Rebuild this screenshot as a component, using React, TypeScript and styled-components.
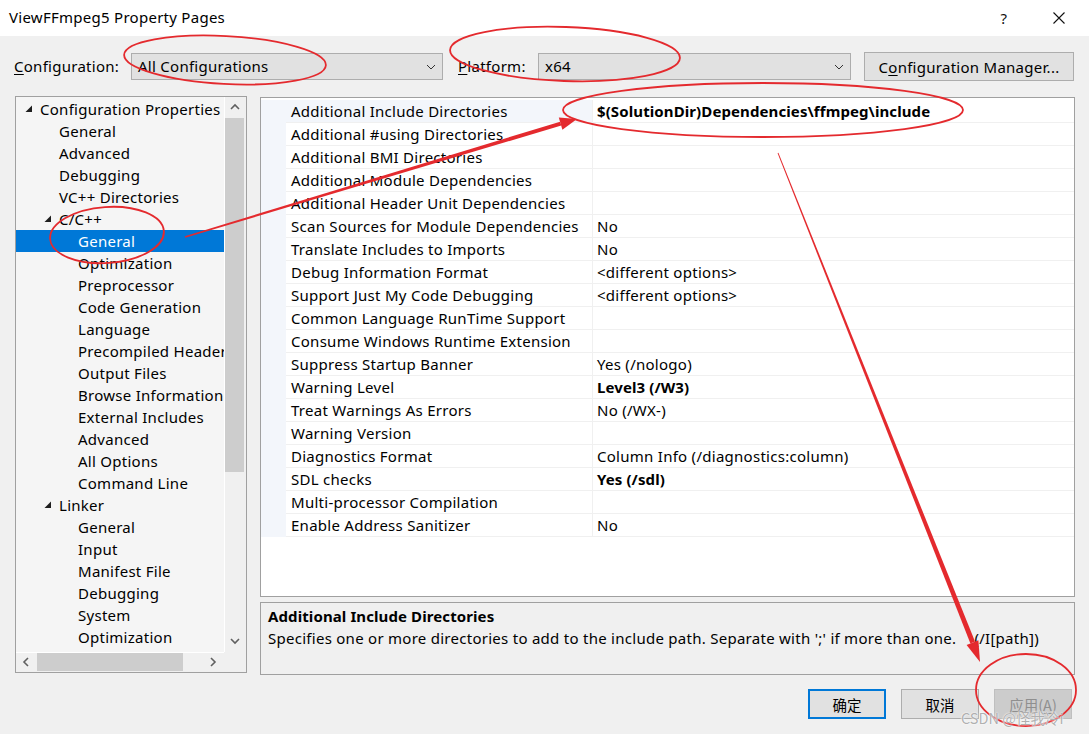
import React from 'react';
import styled, { createGlobalStyle } from 'styled-components';

const FONT = `"Noto Sans", "Open Sans", "Noto Sans CJK SC", sans-serif`;
const CJK = `"Noto Sans CJK SC", "Noto Sans", sans-serif`;

const Global = createGlobalStyle`
  html, body { margin: 0; padding: 0; background: #f0f0f0; overflow: hidden; }
  * { box-sizing: border-box; }
`;

const Window = styled.div`
  position: relative;
  width: 1089px;
  height: 734px;
  background: #f0f0f0;
  font-family: ${FONT};
  font-size: 15px;
  letter-spacing: 0.27px;
  color: #000;
  display: flex;
  flex-direction: column;
  overflow: hidden;
`;

const TitleBar = styled.div`
  height: 36px;
  background: #fff;
  display: flex;
  align-items: center;
  padding-left: 9px;
  flex-shrink: 0;
`;

const Title = styled.div`
  flex: 1;
  font-size: 15px;
  margin-top: -2px;
`;

const TitleButton = styled.div<{ $mr: number }>`
  width: 46px;
  height: 36px;
  margin-right: ${(p) => p.$mr}px;
  display: flex;
  align-items: center;
  justify-content: center;
  font-size: 15px;
  color: #111;
`;

const TopRow = styled.div`
  margin-top: 17px;
  height: 27px;
  display: flex;
  align-items: center;
  padding-left: 14px;
  flex-shrink: 0;
`;

const FieldLabel = styled.div<{ $w: number; $ml?: number }>`
  width: ${(p) => p.$w}px;
  margin-left: ${(p) => p.$ml ?? 0}px;
  margin-top: -1px;
  white-space: nowrap;
  u { text-decoration: underline; text-underline-offset: 2px; }
`;

const Combo = styled.div<{ $w: number }>`
  width: ${(p) => p.$w}px;
  height: 27px;
  background: #e1e1e1;
  border: 1px solid #adadad;
  display: flex;
  align-items: center;
  padding-left: 6px;
  padding-right: 6px;
`;

const ComboText = styled.div`
  flex: 1;
  margin-top: -1px;
`;

const Button = styled.div<{ $w: number; $h: number; $variant?: 'default' | 'normal' | 'disabled' }>`
  width: ${(p) => p.$w}px;
  height: ${(p) => p.$h}px;
  display: flex;
  align-items: center;
  justify-content: center;
  background: ${(p) => (p.$variant === 'disabled' ? '#cccccc' : '#e1e1e1')};
  border: ${(p) =>
    p.$variant === 'default' ? '2px solid #0078d7' : p.$variant === 'disabled' ? '1px solid #bfbfbf' : '1px solid #adadad'};
  color: ${(p) => (p.$variant === 'disabled' ? '#8f8f8f' : '#000')};
  white-space: nowrap;
  u { text-decoration: underline; text-underline-offset: 2px; }
`;

const ManagerButton = styled(Button)`
  margin-left: 13px;
`;

const Main = styled.div`
  margin-top: 16px;
  padding-left: 15px;
  display: flex;
  align-items: flex-start;
  flex-shrink: 0;
`;

const Tree = styled.div`
  width: 232px;
  height: 577px;
  border: 1px solid #a0a0a0;
  background: #f0f0f0;
  display: grid;
  grid-template-columns: 208px 22px;
  grid-template-rows: 555px 20px;
`;

const TreeItems = styled.div`
  background: #f5f5f5;
  overflow: hidden;
  padding-top: 1px;
`;

const TreeRow = styled.div<{ $level: number; $selected?: boolean }>`
  height: 22px;
  display: flex;
  align-items: center;
  padding-left: ${(p) => 9 + 19 * p.$level}px;
  background: ${(p) => (p.$selected ? '#0078d7' : 'transparent')};
  color: ${(p) => (p.$selected ? '#fff' : '#000')};
  white-space: nowrap;
`;

const Expander = styled.div`
  width: 15px;
  height: 22px;
  flex-shrink: 0;
  display: flex;
  align-items: center;
  padding-bottom: 1px;
`;

const VScroll = styled.div`
  background: #f0f0f0;
  border-left: 1px solid #fff;
  padding-right: 2px;
  display: flex;
  flex-direction: column;
`;

const ScrollArrow = styled.div<{ $size: number }>`
  flex: 0 0 ${(p) => p.$size}px;
  display: flex;
  align-items: center;
  justify-content: center;
`;

const VThumb = styled.div`
  flex: 0 0 354px;
  background: #cdcdcd;
`;

const ScrollFill = styled.div`
  flex: 1;
`;

const HScroll = styled.div`
  background: #f0f0f0;
  border-top: 1px solid #fff;
  display: flex;
  padding-bottom: 1px;
`;

const HThumb = styled.div`
  flex: 0 0 146px;
  background: #cdcdcd;
`;

const Corner = styled.div`
  background: #f0f0f0;
`;

const RightCol = styled.div`
  margin-left: 13px;
  margin-top: 1px;
  width: 815px;
  display: flex;
  flex-direction: column;
  gap: 5px;
`;

const Grid = styled.div`
  height: 500px;
  border: 1px solid #a0a0a0;
  background: #fff;
  padding-top: 2px;
  overflow: hidden;
`;

const GridRow = styled.div`
  height: 23px;
  display: flex;
`;

const Gutter = styled.div`
  width: 25px;
  background: #f3f6fb;
`;

const NameCell = styled.div<{ $selected?: boolean }>`
  width: 307px;
  padding-left: 5px;
  display: flex;
  align-items: center;
  border-bottom: 1px solid #f0f0f0;
  border-right: 1px solid #f0f0f0;
  background: ${(p) => (p.$selected ? '#f3f6fb' : '#fff')};
  white-space: nowrap;
  overflow: hidden;
`;

const ValueCell = styled.div<{ $bold?: boolean }>`
  flex: 1;
  padding-left: 4px;
  display: flex;
  align-items: center;
  border-bottom: 1px solid #f0f0f0;
  font-weight: ${(p) => (p.$bold ? 700 : 400)};
  letter-spacing: ${(p) => (p.$bold ? '0.1px' : '0.27px')};
  white-space: nowrap;
`;

const Desc = styled.div`
  height: 73px;
  border: 1px solid #a0a0a0;
  background: #f0f0f0;
  padding: 2px 35px 0 7px;
`;

const DescTitle = styled.div`
  font-weight: 700;
  letter-spacing: 0.1px;
  line-height: 22px;
`;

const DescLine = styled.div`
  display: flex;
  justify-content: space-between;
  line-height: 22px;
  white-space: nowrap;
`;

const ButtonRow = styled.div`
  margin-top: 14px;
  padding-right: 17px;
  display: flex;
  justify-content: flex-end;
  gap: 15px;
  font-family: ${CJK};
  letter-spacing: 0;
  font-size: 14.5px;
`;

const Overlay = styled.svg`
  position: absolute;
  left: 0;
  top: 0;
  pointer-events: none;
`;

const Watermark = styled.div`
  position: absolute;
  left: 961px;
  top: 707px;
  font-family: ${CJK};
  font-size: 14.5px;
  letter-spacing: 0;
  color: rgba(150, 150, 150, 0.75);
  text-shadow: 0 0 2px #fff, 0 0 1px #fff;
  white-space: nowrap;
`;

const ChevronDown = ({ w = 10 }: { w?: number }) => (
  <svg width={w} height="6" viewBox="0 0 10 6">
    <polyline points="1,1 5,5 9,1" fill="none" stroke="#333" strokeWidth="1" />
  </svg>
);

const Arrow = ({ dir }: { dir: 'up' | 'down' | 'left' | 'right' }) => {
  const pts = {
    up: '2,7 6,3 10,7',
    down: '2,4 6,8 10,4',
    left: '7,2 3,6 7,10',
    right: '4,2 8,6 4,10',
  }[dir];
  return (
    <svg width="12" height="12" viewBox="0 0 12 12">
      <polyline points={pts} fill="none" stroke="#606060" strokeWidth="1.6" />
    </svg>
  );
};

const Triangle = () => (
  <svg width="8" height="8" viewBox="0 0 8 8">
    <polygon points="7,0.5 7,7 0.5,7" fill="#1e1e1e" />
  </svg>
);

type TreeNode = { label: string; level: number; expanded?: boolean; selected?: boolean };

const treeNodes: TreeNode[] = [
  { label: 'Configuration Properties', level: 0, expanded: true },
  { label: 'General', level: 1 },
  { label: 'Advanced', level: 1 },
  { label: 'Debugging', level: 1 },
  { label: 'VC++ Directories', level: 1 },
  { label: 'C/C++', level: 1, expanded: true },
  { label: 'General', level: 2, selected: true },
  { label: 'Optimization', level: 2 },
  { label: 'Preprocessor', level: 2 },
  { label: 'Code Generation', level: 2 },
  { label: 'Language', level: 2 },
  { label: 'Precompiled Headers', level: 2 },
  { label: 'Output Files', level: 2 },
  { label: 'Browse Information', level: 2 },
  { label: 'External Includes', level: 2 },
  { label: 'Advanced', level: 2 },
  { label: 'All Options', level: 2 },
  { label: 'Command Line', level: 2 },
  { label: 'Linker', level: 1, expanded: true },
  { label: 'General', level: 2 },
  { label: 'Input', level: 2 },
  { label: 'Manifest File', level: 2 },
  { label: 'Debugging', level: 2 },
  { label: 'System', level: 2 },
  { label: 'Optimization', level: 2 },
];

type Prop = { name: string; value?: string; bold?: boolean; selected?: boolean };

const props: Prop[] = [
  { name: 'Additional Include Directories', value: '$(SolutionDir)Dependencies\\ffmpeg\\include', bold: true, selected: true },
  { name: 'Additional #using Directories' },
  { name: 'Additional BMI Directories' },
  { name: 'Additional Module Dependencies' },
  { name: 'Additional Header Unit Dependencies' },
  { name: 'Scan Sources for Module Dependencies', value: 'No' },
  { name: 'Translate Includes to Imports', value: 'No' },
  { name: 'Debug Information Format', value: '<different options>' },
  { name: 'Support Just My Code Debugging', value: '<different options>' },
  { name: 'Common Language RunTime Support' },
  { name: 'Consume Windows Runtime Extension' },
  { name: 'Suppress Startup Banner', value: 'Yes (/nologo)' },
  { name: 'Warning Level', value: 'Level3 (/W3)', bold: true },
  { name: 'Treat Warnings As Errors', value: 'No (/WX-)' },
  { name: 'Warning Version' },
  { name: 'Diagnostics Format', value: 'Column Info (/diagnostics:column)' },
  { name: 'SDL checks', value: 'Yes (/sdl)', bold: true },
  { name: 'Multi-processor Compilation' },
  { name: 'Enable Address Sanitizer', value: 'No' },
];

const RED = '#e42a2e';

const Annotations = () => (
  <Overlay width="1089" height="734" viewBox="0 0 1089 734">
    <g fill="none" stroke={RED} strokeWidth="1.8">
      <ellipse cx="225" cy="60" rx="101" ry="24" transform="rotate(3 225 60)" />
      <ellipse cx="565" cy="54" rx="115" ry="27" transform="rotate(2 565 54)" />
      <ellipse cx="763" cy="110" rx="200" ry="27" />
      <ellipse cx="107" cy="235" rx="57" ry="28" transform="rotate(-4 107 235)" />
      <ellipse cx="1026" cy="690" rx="50" ry="36" />
    </g>
    <g fill={RED}>
      <polygon points="185.2,237.8 184.8,236.2 560.1,121.7 561.3,125.5" />
      <polygon points="577,119 562.4,129.8 558.8,117.4" />
      <polygon points="778.4,152.8 777.6,153.2 970.4,643.4 975.0,641.6" />
      <polygon points="980,662 966.6,645.0 978.4,640.2" />
    </g>
  </Overlay>
);

export default function App() {
  return (
    <>
      <Global />
      <Window>
        <TitleBar>
          <Title>ViewFFmpeg5 Property Pages</Title>
          <TitleButton $mr={9}>?</TitleButton>
          <TitleButton $mr={7}>
            <svg width="12" height="12" viewBox="0 0 12 12">
              <path d="M0.5,0.5 L11.5,11.5 M11.5,0.5 L0.5,11.5" stroke="#111" strokeWidth="1.1" fill="none" />
            </svg>
          </TitleButton>
        </TitleBar>

        <TopRow>
          <FieldLabel $w={117}>
            <u>C</u>onfiguration:
          </FieldLabel>
          <Combo $w={312}>
            <ComboText>All Configurations</ComboText>
            <ChevronDown />
          </Combo>
          <FieldLabel $w={80} $ml={15}>
            <u>P</u>latform:
          </FieldLabel>
          <Combo $w={313}>
            <ComboText>x64</ComboText>
            <ChevronDown />
          </Combo>
          <ManagerButton $w={210} $h={29}>
            C<u>o</u>nfiguration Manager...
          </ManagerButton>
        </TopRow>

        <Main>
          <Tree>
            <TreeItems>
              {treeNodes.map((n, i) => (
                <TreeRow key={i} $level={n.level} $selected={n.selected}>
                  <Expander>{n.expanded ? <Triangle /> : null}</Expander>
                  {n.label}
                </TreeRow>
              ))}
            </TreeItems>
            <VScroll>
              <ScrollArrow $size={21}>
                <Arrow dir="up" />
              </ScrollArrow>
              <VThumb />
              <ScrollFill />
              <ScrollArrow $size={22}>
                <Arrow dir="down" />
              </ScrollArrow>
            </VScroll>
            <HScroll>
              <ScrollArrow $size={21}>
                <Arrow dir="left" />
              </ScrollArrow>
              <HThumb />
              <ScrollFill />
              <ScrollArrow $size={22}>
                <Arrow dir="right" />
              </ScrollArrow>
            </HScroll>
            <Corner />
          </Tree>

          <RightCol>
            <Grid>
              {props.map((p, i) => (
                <GridRow key={i}>
                  <Gutter />
                  <NameCell $selected={p.selected}>{p.name}</NameCell>
                  <ValueCell $bold={p.bold}>{p.value ?? ''}</ValueCell>
                </GridRow>
              ))}
            </Grid>
            <Desc>
              <DescTitle>Additional Include Directories</DescTitle>
              <DescLine>
                <span>Specifies one or more directories to add to the include path. Separate with ';' if more than one.</span>
                <span>(/I[path])</span>
              </DescLine>
            </Desc>
          </RightCol>
        </Main>

        <ButtonRow>
          <Button $w={78} $h={30} $variant="default">确定</Button>
          <Button $w={78} $h={30} $variant="normal">取消</Button>
          <Button $w={78} $h={30} $variant="disabled">
            应用(<u>A</u>)
          </Button>
        </ButtonRow>

        <Annotations />
        <Watermark>CSDN @怪我冷i</Watermark>
      </Window>
    </>
  );
}
